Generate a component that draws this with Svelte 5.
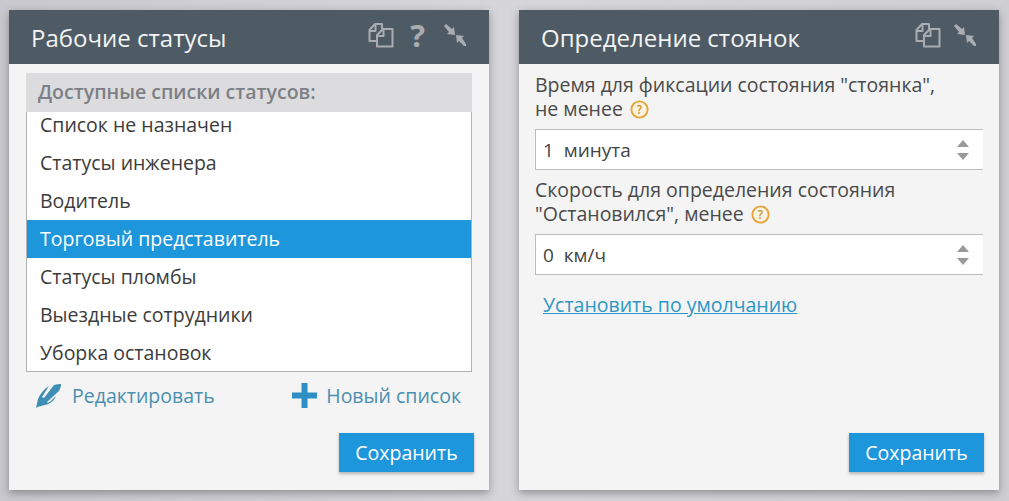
<script>
  const items = ['Список не назначен','Статусы инженера','Водитель','Торговый представитель','Статусы пломбы','Выездные сотрудники','Уборка остановок'];
</script>

{#snippet copyIcon()}
  <svg class="ic" width="26" height="25" viewBox="0 0 26 25" fill="none" stroke="#a9adb1" stroke-width="2" stroke-linejoin="round">
    <path d="M9 18H1.5V7L7 1h7v5"/><path d="M7.500 1.500V8H2"/>
    <path d="M15 6h9.500v17.500H9V12z"/><path d="M15.500 6.500V13H9.500"/>
  </svg>
{/snippet}
{#snippet collapseIcon()}
  <svg class="ic" width="24" height="24" viewBox="0 0 24 24" fill="#a9adb1">
    <path d="M1 3l2-2 6 5 2-2 1 8-8-1 2-2z"/><path d="M23 23l-2 0-5-5-2 2-1-8 8 1-2 2 4 6z"/>
  </svg>
{/snippet}
{#snippet help()}
  <svg class="help" width="19" height="19" viewBox="0 0 18 18">
    <circle cx="9" cy="9" r="7.700" fill="#fbf3df" stroke="#e3a53c" stroke-width="1.800"/>
    <text x="9" y="13" text-anchor="middle" font-size="11" font-weight="600" fill="#c9922f">?</text>
  </svg>
{/snippet}
{#snippet spin()}
  <span class="spin"><i class="up"></i><i class="down"></i></span>
{/snippet}

<div class="page">
  <section class="panel">
    <header>
      <h2>Рабочие статусы</h2>
      <div class="icons">
        {@render copyIcon()}
        <span class="q">?</span>
        {@render collapseIcon()}
      </div>
    </header>
    <div class="body left">
      <div class="cap">Доступные списки статусов:</div>
      <div class="list">
        <ul>
          {#each items as it, i}
            <li class:sel={i === 3}>{it}</li>
          {/each}
        </ul>
      </div>
      <div class="actions">
        <span class="act">
          <svg width="28" height="26" viewBox="0 0 28 26" fill="#3f8fb5">
            <path d="M1 25l2-9C5 11 9 6 14 3l-7 11 2 1L19 2c3-1 5-1 7-1 0 3-1 5-2 7L12 19l1 1c3-2 5-4 8-7-2 5-6 8-11 9-3 1-6 1-9 3z"/>
          </svg>
          Редактировать
        </span>
        <span class="act">
          <svg width="25" height="25" viewBox="0 0 25 25" fill="#2f8fc4"><path d="M9.500 0h6v9.500h9.500v6h-9.500V25h-6v-9.500H0v-6h9.500z"/></svg>
          Новый список
        </span>
      </div>
      <div class="foot"><button>Сохранить</button></div>
    </div>
  </section>

  <section class="panel">
    <header>
      <h2>Определение стоянок</h2>
      <div class="icons tight">
        {@render copyIcon()}
        {@render collapseIcon()}
      </div>
    </header>
    <div class="body right">
      <p class="lab first">Время для фиксации состояния "стоянка",<br>не менее {@render help()}</p>
      <div class="field"><span>1&nbsp; минута</span>{@render spin()}</div>
      <p class="lab">Скорость для определения состояния<br>"Остановился", менее {@render help()}</p>
      <div class="field"><span>0&nbsp; км/ч</span>{@render spin()}</div>
      <span class="link">Установить по умолчанию</span>
      <div class="foot"><button>Сохранить</button></div>
    </div>
  </section>
</div>

<style>
  :global(body) { margin: 0; background: #d2d1d6; }
  .page {
    width: 1009px; height: 501px; box-sizing: border-box;
    padding: 10px 10px 0 9px;
    display: flex; gap: 30px;
    font-family: "Open Sans", sans-serif;
    background: linear-gradient(90deg, #c9c8ce, #d6d5da 50%, #cfced3);
    overflow: hidden;
  }
  .panel {
    width: 480px; height: 480px;
    background: #f4f4f4;
    box-shadow: 0 3px 8px rgba(60,60,60,.45);
    display: flex; flex-direction: column;
  }
  header {
    height: 54px; flex: none;
    background: #4f5b64;
    display: flex; align-items: center; justify-content: space-between;
    padding: 0 22px;
    box-sizing: border-box;
  }
  h2 { margin: 1px 0 0; font-size: 24px; font-weight: 400; color: #f2f3f4; }
  .icons { display: flex; align-items: center; gap: 16px; margin-top: -4px; }
  .icons.tight { gap: 12px; }
  .ic { display: block; }
  .q { font-size: 31px; font-weight: 700; color: #a9adb1; line-height: 26px; margin-right: 2px; }
  .body { flex: 1; display: flex; flex-direction: column; position: relative; }
  .left { padding: 9px 15px 18px 17px; }
  .cap {
    width: 446px;
    height: 39px; line-height: 38px; box-sizing: border-box;
    background: #dcdcde; color: #7c7f85;
    font-size: 19.5px; font-weight: 600; padding-left: 12px;
  }
  .list {
    width: 446px;
    height: 260px; box-sizing: border-box; overflow: hidden;
    background: #fff;
    border: 1px solid #b2b2b2; border-top: 0;
  }
  ul { list-style: none; margin: -6px 0 0; padding: 0; }
  li {
    height: 38px; line-height: 37px;
    padding-left: 13px;
    font-size: 19.5px; color: #3c3c3c;
  }
  li.sel { background: #1e96dc; color: #fff; }
  .actions {
    display: flex; justify-content: space-between;
    padding: 10px 13px 0 9px;
  }
  .act {
    display: flex; align-items: center; gap: 9px;
    font-size: 19.5px; color: #4a8fb0; height: 27px;
  }
  .foot { margin-top: auto; display: flex; justify-content: flex-end; }
  button {
    width: 135px; height: 39px; border: 0; border-radius: 0;
    background: #1e96dc; color: #fff;
    font: 400 19.5px "Open Sans", sans-serif;
    box-shadow: 0 2px 3px rgba(60,60,60,.35);
    padding: 0;
  }
  .right { padding: 9px 15px 18px 16px; }
  .lab { margin: 8px 0 8px; font-size: 19.5px; line-height: 24px; color: #4a4a4a; white-space: nowrap; }
  .lab.first { margin-top: 0; }
  .help { vertical-align: -3px; margin-left: 2px; }
  .help text { font-family: "Open Sans", sans-serif; }
  .field {
    width: 448px; height: 41px; box-sizing: border-box;
    background: #fff;
    border: 1px solid #bcbcbc; border-right: 0;
    display: flex; align-items: center; justify-content: space-between;
    padding: 0 14px 0 7px;
    font-size: 19px; color: #444;
  }
  .spin { display: flex; flex-direction: column; gap: 6px; }
  .spin i { display: block; width: 0; height: 0; border-left: 6.5px solid transparent; border-right: 6.5px solid transparent; }
  .spin .up { border-bottom: 7px solid #9a9a9a; }
  .spin .down { border-top: 7px solid #9a9a9a; }
  .link {
    margin: 16px 0 0 8px; align-self: flex-start;
    font-size: 19.5px; color: #2d97c4; text-decoration: underline;
  }
</style>
